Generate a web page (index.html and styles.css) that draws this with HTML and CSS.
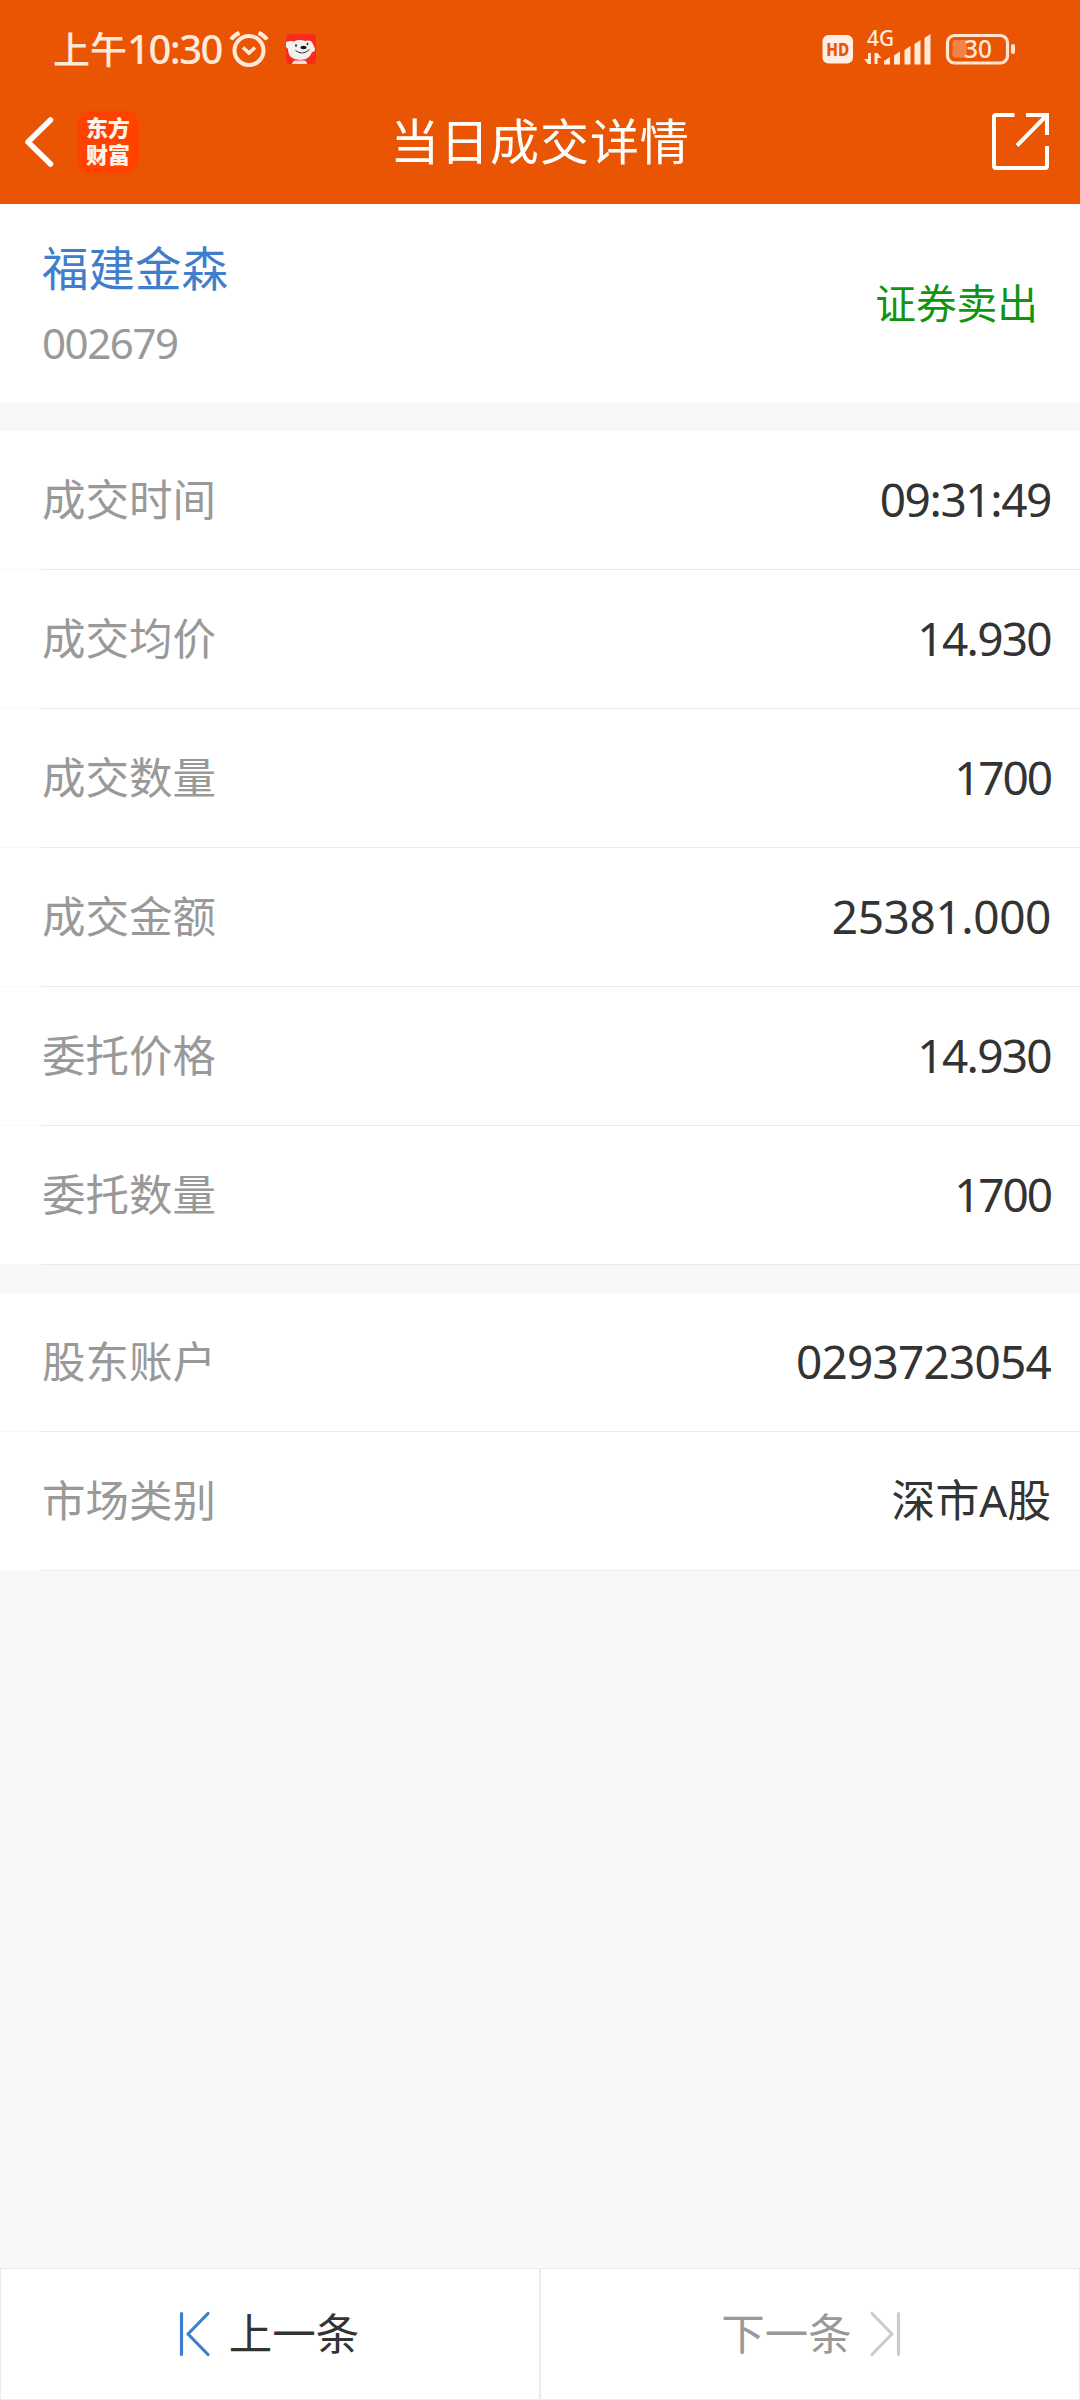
FILE: index.html
```html
<!DOCTYPE html>
<html lang="zh-CN">
<head>
<meta charset="utf-8">
<title>当日成交详情</title>
<link rel="stylesheet" href="styles.css">
</head>
<body>
<div class="screen">
  <header class="header">
    <div class="status">
      <span class="clock">上午<span class="clock-num">10:30</span></span>
      <svg class="alarm" width="40" height="38" viewBox="0 0 40 38" fill="none" stroke="#ffe9d9" stroke-width="4">
        <circle cx="20" cy="20.500" r="14.500"/>
        <path d="M2 9.500Q5 5 10.500 3M38 9.500Q35 5 29.500 3" stroke-linecap="butt"/>
        <path d="M14 17.500l6 5.500 6-5.500" stroke-width="3.600"/>
      </svg>
      <svg class="mascot" width="30" height="30" viewBox="0 0 30 30">
        <rect width="30" height="30" rx="4" fill="#fb2b1c"/>
        <path d="M6 30q1-3.500 3-3.500h9q3 0 3 3.500z" fill="#e9dfdd"/>
        <path d="M0 8q4-1.500 8-.500Q13 5 19 7q3-1 6 0 2 2 4 8 0 3-3 3-2 6-8 7.500-8 1.500-13-2.500-3-3-3-8l-2-2z" fill="#f5f1f0"/>
        <ellipse cx="17.500" cy="13.500" rx="3" ry="1.700" fill="#151515"/>
        <ellipse cx="10" cy="11.500" rx=".9" ry="1.300" fill="#222"/><ellipse cx="21.500" cy="10" rx=".9" ry="1.200" fill="#222"/>
        <path d="M9.500 16.500q7 5.500 14-1" fill="none" stroke="#333" stroke-width="1"/>
      </svg>
      <svg class="network" width="194" height="58" viewBox="0 -10 194 58">
        <rect x="0.500" y="5" width="30.500" height="28.500" rx="6" fill="#ffeee2"/>
        <text class="hd-text" x="15.700" y="25.500" text-anchor="middle" textLength="23" lengthAdjust="spacingAndGlyphs">HD</text>
        <text class="net-text" x="45" y="15.500" textLength="27" lengthAdjust="spacingAndGlyphs">4G</text>
        <g fill="#ffe9d9">
          <path d="M46 23h3v11h-3l-4-5h4zM52.500 23h3l4 5h-4v6h-3z"/>
          <path d="M62 31l6-4v7.500h-6zM72 25.500l6-4v13h-6zM82.500 20l6-4v18.500h-6zM92.500 14l6-4v24.500h-6zM102.500 8l6-4v30.500h-6z"/>
        </g>
        <rect x="125.500" y="5.500" width="60" height="27.500" rx="7" fill="none" stroke="#ffe5d2" stroke-width="3.200"/>
        <path d="M133.500 10h11v17.500h-11q-3 0-3-3v-11.500q0-3 3-3z" fill="#f28347"/>
        <rect x="189" y="14" width="4" height="10" rx="2" fill="#ffe5d2"/>
        <text class="battery-text" x="142" y="28" textLength="28" lengthAdjust="spacingAndGlyphs">30</text>
      </svg>
    </div>
    <nav class="titlebar">
      <div class="nav-left">
        <svg width="32" height="52" viewBox="0 0 32 52" fill="none" stroke="#fff" stroke-width="5.500" stroke-linecap="round" stroke-linejoin="round"><path d="M28.500 4L6 26l22.500 22"/></svg>
        <div class="logo"><span>东方</span><span>财富</span></div>
      </div>
      <h1 class="title">当日成交详情</h1>
      <svg class="share" width="60" height="60" viewBox="0 0 60 60" fill="none" stroke="#fff" stroke-width="4"><path d="M24.500 3H6Q4 3 4 5v49q0 2 2 2h49q2 0 2-2V34M36 3h21v20M57 3L27 33.500"/></svg>
    </nav>
  </header>

  <section class="stock">
    <div>
      <div class="stock-name">福建金森</div>
      <div class="stock-code">002679</div>
    </div>
    <div class="side">证券卖出</div>
  </section>

  <section class="group">
    <div class="row"><span class="label">成交时间</span><span class="value time">09:31:49</span></div>
    <div class="row"><span class="label">成交均价</span><span class="value price">14.930</span></div>
    <div class="row"><span class="label">成交数量</span><span class="value qty">1700</span></div>
    <div class="row"><span class="label">成交金额</span><span class="value amount">25381.000</span></div>
    <div class="row"><span class="label">委托价格</span><span class="value price">14.930</span></div>
    <div class="row"><span class="label">委托数量</span><span class="value qty">1700</span></div>
  </section>

  <section class="group">
    <div class="row"><span class="label">股东账户</span><span class="value account">0293723054</span></div>
    <div class="row"><span class="label">市场类别</span><span class="value market">深市A股</span></div>
  </section>

  <footer class="pager">
    <div class="page-btn">
      <svg width="32" height="46" viewBox="0 0 32 46" fill="none" stroke="#3f7ecb" stroke-width="3.200" stroke-linecap="round" stroke-linejoin="round"><path d="M2.500 2.500v41M29 2.500L9 23l20 20.500"/></svg>
      <span class="page-text">上一条</span>
    </div>
    <div class="page-btn disabled">
      <span class="page-text">下一条</span>
      <svg width="32" height="46" viewBox="0 0 32 46" fill="none" stroke="#ccc" stroke-width="3.200" stroke-linecap="round" stroke-linejoin="round"><path d="M29.500 2.500v41M3 2.500L23 23 3 43.500"/></svg>
    </div>
  </footer>
</div>
</body>
</html>
```
FILE: styles.css
```css
* { box-sizing: border-box; }
body {
  margin: 0;
  background: #f7f8fa;
  font-family: "Noto Sans", "Noto Sans CJK SC", sans-serif;
}
.screen {
  display: flex;
  flex-direction: column;
  width: 1080px;
  height: 2400px;
  overflow: hidden;
}
svg { display: block; flex: none; }

.header {
  height: 204px;
  background: #ea5504;
  color: #fff;
}
.status {
  display: flex;
  align-items: center;
  height: 98px;
  padding: 0 64px 0 53px;
  color: #ffe9d9;
}
.clock {
  width: 176px;
  padding-bottom: 2px;
  font-size: 37px;
  font-weight: 500;
  line-height: 50px;
  white-space: nowrap;
  font-family: "Noto Sans CJK SC", sans-serif;
}
.clock-num {
  font-family: "Noto Sans", sans-serif;
  font-size: 40px;
  letter-spacing: -1.5px;
}
.mascot { margin-left: 17px; }
.network { margin-left: auto; }
.hd-text {
  font: 800 17px "Noto Sans", sans-serif;
  fill: #ea5504;
}
.net-text {
  font: 500 21px "Noto Sans", sans-serif;
  fill: #ffe9d9;
}
.battery-text {
  font: 500 25px "Noto Sans", sans-serif;
  fill: #ffe9d9;
}

.titlebar {
  display: grid;
  grid-template-columns: 1fr auto 1fr;
  align-items: center;
  height: 87px;
  padding: 0 30px 0 22px;
}
.nav-left {
  display: flex;
  align-items: center;
  gap: 23px;
}
.logo {
  display: flex;
  flex-direction: column;
  align-items: center;
  justify-content: center;
  width: 62px;
  height: 62px;
  border-radius: 13px;
  background: #ff4200;
  font: 900 22px/27px "Liberation Sans", "Noto Sans CJK SC", sans-serif;
  color: #fff4ec;
}
.title {
  margin: 0 -4px 0 4px;
  padding-bottom: 1px;
  font-size: 49px;
  font-weight: 400;
  line-height: 68px;
  letter-spacing: .9px;
}
.share { justify-self: end; }

.stock {
  display: flex;
  align-items: center;
  justify-content: space-between;
  height: 199px;
  padding: 0 42px;
  background: #fff;
}
.stock-name {
  padding-top: 4px;
  font-size: 46.500px;
  line-height: 74px;
  color: #3f7ecb;
}
.stock-code {
  padding-top: 1px;
  font-size: 42px;
  line-height: 74px;
  letter-spacing: -1.4px;
  color: #999;
}
.side {
  padding-bottom: 1px;
  font-size: 40.700px;
  line-height: 60px;
  color: #119511;
}

.group {
  margin-top: 28px;
  background: #fff;
}
.row {
  display: flex;
  align-items: center;
  justify-content: space-between;
  height: 139px;
  padding: 0 29px 1px 42px;
  background: linear-gradient(to right, #f7f8fa 41px, #ebebeb 41px) bottom / 100% 1px no-repeat;
}
.label {
  padding-bottom: 6px;
  font-size: 43.500px;
  color: #999;
}
.value {
  padding-bottom: 3px;
  font-size: 46px;
  color: #333;
}
.time { letter-spacing: -1.4px; }
.price { letter-spacing: -1.7px; }
.qty { letter-spacing: -2.1px; }
.amount { letter-spacing: -.4px; }
.account { letter-spacing: -.8px; }
.market { padding-bottom: 6px; font-size: 43.800px; }

.pager {
  display: grid;
  grid-template-columns: 1fr 1fr;
  height: 132px;
  margin-top: auto;
}
.page-btn {
  display: flex;
  align-items: center;
  justify-content: center;
  gap: 18px;
  border: 1px solid #ebebeb;
  background: #fff;
  font-size: 43.500px;
  color: #333;
}
.page-btn:first-child { padding-right: 2px; }
.page-text { padding-bottom: 6px; }
.page-btn.disabled {
  gap: 17px;
  padding-left: 2px;
  color: #999;
}
```
